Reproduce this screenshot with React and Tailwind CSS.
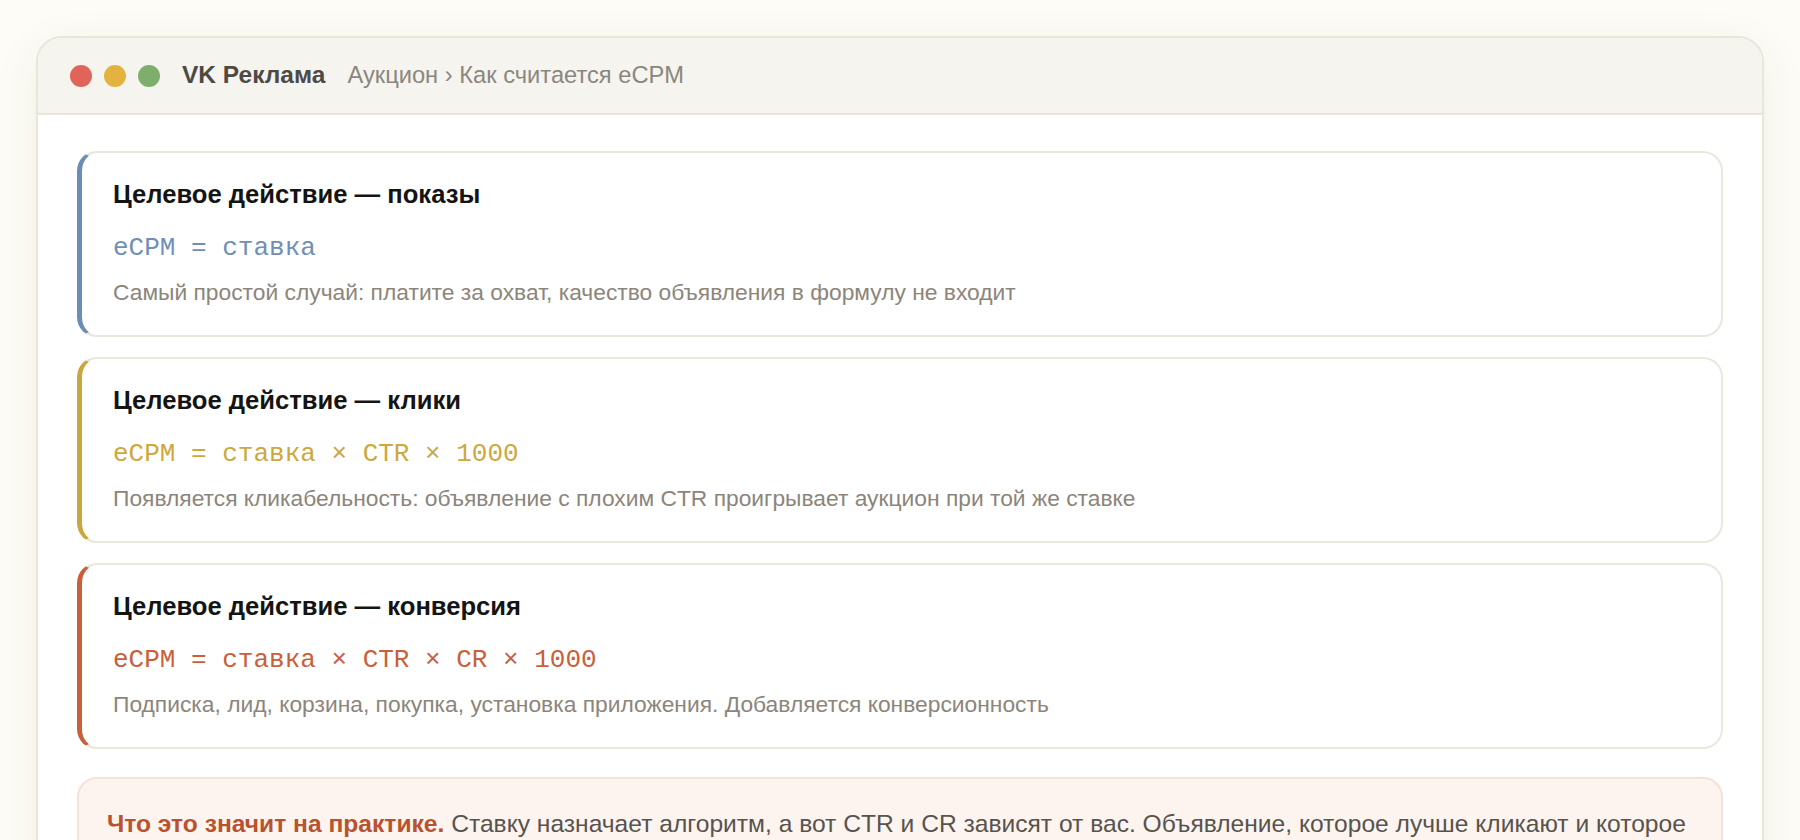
const cards = [
  {
    title: 'Целевое действие — показы',
    formula: 'eCPM = ставка',
    note: 'Самый простой случай: платите за охват, качество объявления в формулу не входит',
    accent: 'border-l-[#6b8cb3]',
    ink: 'text-[#6f8fb6]',
  },
  {
    title: 'Целевое действие — клики',
    formula: 'eCPM = ставка × CTR × 1000',
    note: 'Появляется кликабельность: объявление с плохим CTR проигрывает аукцион при той же ставке',
    accent: 'border-l-[#c9a640]',
    ink: 'text-[#cda83c]',
  },
  {
    title: 'Целевое действие — конверсия',
    formula: 'eCPM = ставка × CTR × CR × 1000',
    note: 'Подписка, лид, корзина, покупка, установка приложения. Добавляется конверсионность',
    accent: 'border-l-[#c8603c]',
    ink: 'text-[#c9603a]',
  },
]

export default function App() {
  return (
    <div className="min-h-screen bg-[#fdfcf6] p-9 font-['Liberation_Sans',Arial,sans-serif]">
      <div className="overflow-hidden rounded-[26px] border-2 border-[#e9e5d9] bg-white shadow-[0_12px_48px_rgba(60,50,20,0.07)]">

        {/* шапка окна */}
        <div className="flex h-[77px] items-center border-b-2 border-[#e9e5d9] bg-[#f5f4ef] px-8">
          <div className="flex gap-3">
            <span className="h-[22px] w-[22px] rounded-full bg-[#e0645a]" />
            <span className="h-[22px] w-[22px] rounded-full bg-[#e4b33f]" />
            <span className="h-[22px] w-[22px] rounded-full bg-[#7eae6b]" />
          </div>
          <span className="ml-[22px] text-[24.5px] font-bold text-[#4d4a45]">VK Реклама</span>
          <span className="ml-[22px] text-[23.7px] text-[#8c877e]">Аукцион › Как считается eCPM</span>
        </div>

        {/* карточки формул */}
        <div className="flex flex-col px-[39px] pt-[36px] pb-10">
          <div className="flex flex-col gap-5">
            {cards.map(c => (
              <div key={c.title}
                className={`rounded-[20px] border-2 border-l-[5px] border-[#eae7dc] ${c.accent} bg-white pt-[26px] pb-7 pl-[31px] pr-8`}>
                <h3 className="text-[25.6px] leading-[31px] font-bold text-[#141414]">{c.title}</h3>
                <p className={`mt-[21px] font-['Liberation_Mono',monospace] text-[26px] leading-[34px] ${c.ink}`}>
                  {c.formula}
                </p>
                <p className="mt-3 text-[22.8px] leading-[30px] text-[#8c857b]">{c.note}</p>
              </div>
            ))}
          </div>

          <div className="mt-7 rounded-[20px] border-2 border-[#f4e1d8] bg-[#fdf4f0] pl-[28px] pr-7 pt-[26px] pb-7 text-[24.6px] leading-[38px] text-[#57534d]">
            <b className="text-[#b8522f]">Что это значит на практике.</b>{' '}
            Ставку назначает алгоритм, а вот CTR и CR зависят от вас. Объявление, которое лучше кликают и которое
            чаще доводит до целевого действия, выигрывает аукцион даже при меньшей ставке.
          </div>
        </div>
      </div>
    </div>
  )
}
